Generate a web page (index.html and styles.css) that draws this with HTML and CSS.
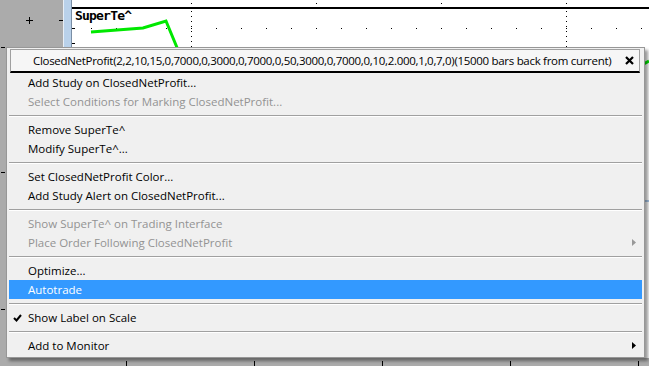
FILE: index.html
```html
<!DOCTYPE html>
<html>
<head>
<meta charset="utf-8">
<title>Chart context menu</title>
<link rel="stylesheet" href="styles.css">
</head>
<body>
<div class="screen">
  <div class="main">
    <div class="price-scale">
      <svg width="63" height="358">
        <line x1="26" y1="20.5" x2="33" y2="20.5" stroke="#000"/>
        <line x1="29.5" y1="17" x2="29.5" y2="24" stroke="#000"/>
        <line x1="59" y1="20.5" x2="63" y2="20.5" stroke="#000"/>
        <line x1="1" y1="47.5" x2="5" y2="47.5" stroke="#000"/>
        <line x1="1" y1="172.5" x2="5" y2="172.5" stroke="#000"/>
        <line x1="1" y1="309.5" x2="5" y2="309.5" stroke="#000"/>
      </svg>
    </div>
    <div class="scroll-strip"></div>
    <div class="chart">
      <svg width="577" height="358">
        <rect x="0" y="7" width="577" height="2" fill="#000"/>
        <rect x="119" y="3" width="1" height="1" fill="#000"/>
        <rect x="244" y="3" width="1" height="1" fill="#000"/>
        <rect x="369" y="3" width="1" height="1" fill="#000"/>
        <rect x="494" y="3" width="1" height="1" fill="#000"/>
        <line x1="119.5" y1="11" x2="119.5" y2="358" stroke="#000" stroke-dasharray="1 4"/>
        <line x1="494.5" y1="11" x2="494.5" y2="358" stroke="#000" stroke-dasharray="1 4"/>
        <line x1="19" y1="28.5" x2="577" y2="28.5" stroke="#000" stroke-dasharray="1 24"/>
        <line x1="0" y1="28.5" x2="3" y2="28.5" stroke="#000"/>
        <line x1="0" y1="43.5" x2="3" y2="43.5" stroke="#000"/>
        <rect x="560" y="200" width="17" height="2" fill="#a9c6e6"/>
        <polyline points="19,32 71,28 94,21 106,50 112,66" fill="none" stroke="#00e800" stroke-width="3"/>
        <polyline points="566,67 577,61" fill="none" stroke="#00e800" stroke-width="3"/>
        <text class="study-name" x="3" y="20">SuperTe^</text>
      </svg>
    </div>
  </div>
  <div class="time-axis">
    <svg width="649" height="8">
      <line x1="126.5" y1="3" x2="126.5" y2="8" stroke="#000"/>
      <line x1="254.5" y1="3" x2="254.5" y2="8" stroke="#000"/>
      <line x1="382.5" y1="3" x2="382.5" y2="8" stroke="#000"/>
      <line x1="510.5" y1="3" x2="510.5" y2="8" stroke="#000"/>
      <line x1="638.5" y1="3" x2="638.5" y2="8" stroke="#000"/>
    </svg>
  </div>

  <div class="menu">
    <div class="menu-title">
      <span class="title-text">ClosedNetProfit(2,2,10,15,0,7000,0,3000,0,7000,0,50,3000,0,7000,0,10,2.000,1,0,7,0)(15000 bars back from current)</span>
      <svg class="close" width="9" height="9" viewBox="0 0 9 9"><path d="M1 1 L8 8 M8 1 L1 8" stroke="#000" stroke-width="2.2"/></svg>
    </div>
    <div class="item">Add Study on ClosedNetProfit...</div>
    <div class="item disabled">Select Conditions for Marking ClosedNetProfit...</div>
    <div class="sep"></div>
    <div class="item">Remove SuperTe^</div>
    <div class="item">Modify SuperTe^...</div>
    <div class="sep"></div>
    <div class="item">Set ClosedNetProfit Color...</div>
    <div class="item">Add Study Alert on ClosedNetProfit...</div>
    <div class="sep"></div>
    <div class="item disabled">Show SuperTe^ on Trading Interface</div>
    <div class="item disabled">Place Order Following ClosedNetProfit<svg class="arrow" width="4" height="7" viewBox="0 0 4 7"><path d="M0 0 L4 3.5 L0 7 Z" fill="#999"/></svg></div>
    <div class="sep"></div>
    <div class="item">Optimize...</div>
    <div class="item active">Autotrade</div>
    <div class="sep"></div>
    <div class="item"><svg class="check" width="9" height="8" viewBox="0 0 9 8"><path d="M1 4 L3.5 6.5 L8 1" fill="none" stroke="#000" stroke-width="2"/></svg>Show Label on Scale</div>
    <div class="sep"></div>
    <div class="item">Add to Monitor<svg class="arrow" width="4" height="7" viewBox="0 0 4 7"><path d="M0 0 L4 3.5 L0 7 Z" fill="#000"/></svg></div>
  </div>
</div>
</body>
</html>
```

FILE: styles.css
```css
/* Chart window with study context menu */

body
{ margin: 0;
background-color: #ababab;
}

svg { display: block; }

.screen
{ position: relative;
width: 649px;
height: 366px;
overflow: hidden;
}

.main
{ display: flex;
height: 358px;
}

.price-scale
{ width: 63px;
background-color: #ababab;
}

.scroll-strip
{ width: 7px;
background-color: #b9d1ea;
border-left: 1px solid #e8eef5;
border-right: 1px solid #7a8ea5;
}

.chart
{ flex: 1;
background-color: #fff;
}

.study-name
{ font-family: "DejaVu Sans Mono", monospace;
font-weight: bold;
font-size: 13px;
letter-spacing: -0.8px;
fill: #000;
}

.time-axis
{ height: 8px;
background-color: #ababab;
}

/* Popup menu */

.menu
{ position: absolute;
left: 6px;
top: 47px;
width: 639px;
box-sizing: border-box;
padding: 1px 2px 2px 2px;
background-color: #f0f0f0;
border: 1px solid #979797;
box-shadow: 3px 3px 3px rgba(0, 0, 0, 0.4);
font-family: "Open Sans", sans-serif;
font-size: 11.5px;
color: #000;
}

.menu-title
{ display: flex;
align-items: center;
height: 21px;
margin: 0 2px 0 1px;
padding: 0 5px 0 22px;
background-color: #f6f6f6;
border: 1px solid #a0a0a0;
border-bottom: 2px solid #000;
}

.title-text
{ flex: 1;
white-space: nowrap;
letter-spacing: -0.3px;
}

.close { flex-shrink: 0; }

.item
{ position: relative;
display: flex;
align-items: center;
height: 19px;
padding-left: 19px;
white-space: nowrap;
}

.item.disabled { color: #939393; }

.item.active
{ background-color: #3399ff;
color: #fff;
}

.sep
{ margin: 4px 0 3px 0;
border-top: 1px solid #a0a0a0;
border-bottom: 1px solid #fff;
}

.check
{ position: absolute;
left: 4px;
top: 6px;
}

.arrow
{ margin-left: auto;
margin-right: 6px;
}
```
